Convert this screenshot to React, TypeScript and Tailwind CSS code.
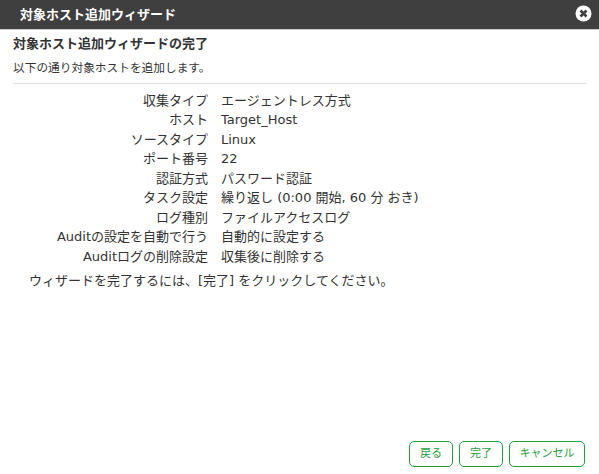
import React from 'react';

const rows = [
  ['収集タイプ', 'エージェントレス方式'],
  ['ホスト', 'Target_Host'],
  ['ソースタイプ', 'Linux'],
  ['ポート番号', '22'],
  ['認証方式', 'パスワード認証'],
  ['タスク設定', '繰り返し (0:00 開始, 60 分 おき)'],
  ['ログ種別', 'ファイルアクセスログ'],
  ['Auditの設定を自動で行う', '自動的に設定する'],
  ['Auditログの削除設定', '収集後に削除する'],
];

const buttons = [
  { label: '戻る', width: 'w-[44px]' },
  { label: '完了', width: 'w-[44px]' },
  { label: 'キャンセル', width: 'w-[76px]' },
];

const App: React.FC = () => {
  return (
    <div className="w-[599px] h-[474px] flex flex-col bg-white overflow-hidden text-[13px] text-[#333333] font-['DejaVu_Sans','Noto_Sans_CJK_JP',sans-serif]">
      <div className="h-[30px] shrink-0 flex items-center justify-between pl-[20px] pr-[7px] bg-[#3f3f3f] border-b border-[#cccccc]">
        <span className="text-white font-bold">対象ホスト追加ウィザード</span>
        <svg width="17" height="17" viewBox="0 0 17 17" className="mb-[3px]">
          <circle cx="8.5" cy="8.5" r="8" fill="#ffffff" />
          <path d="M5.5 5.5l6 6M11.5 5.5l-6 6" stroke="#3f3f3f" strokeWidth="2.6" />
        </svg>
      </div>

      <div className="flex-1 flex flex-col px-[13px]">
        <h2 className="mt-[5px] leading-[18px] font-bold">対象ホスト追加ウィザードの完了</h2>
        <p className="mt-[7px] leading-[16px] text-[11.7px] pb-[7px] border-b border-[#dddddd]">以下の通り対象ホストを追加します。</p>

        <div className="mt-[6.8px] flex flex-col">
          {rows.map(([label, value]) => (
            <div key={label} className="flex h-[19.5px] items-center">
              <div className="w-[195px] text-right shrink-0">{label}</div>
              <div className="ml-[13px]">{value}</div>
            </div>
          ))}
        </div>

        <p className="mt-[6.2px] ml-[16px] leading-[18px]">ウィザードを完了するには、[完了] をクリックしてください。</p>

        <div className="mt-auto mb-[7px] flex justify-end gap-[6px] pr-[1px]">
          {buttons.map((b) => (
            <button key={b.label} className={`${b.width} h-[26px] flex items-center justify-center rounded-[5px] border border-[#22a03c] bg-white text-[11px] text-[#22a03c]`}>
              {b.label}
            </button>
          ))}
        </div>
      </div>
    </div>
  );
};

export default App;
